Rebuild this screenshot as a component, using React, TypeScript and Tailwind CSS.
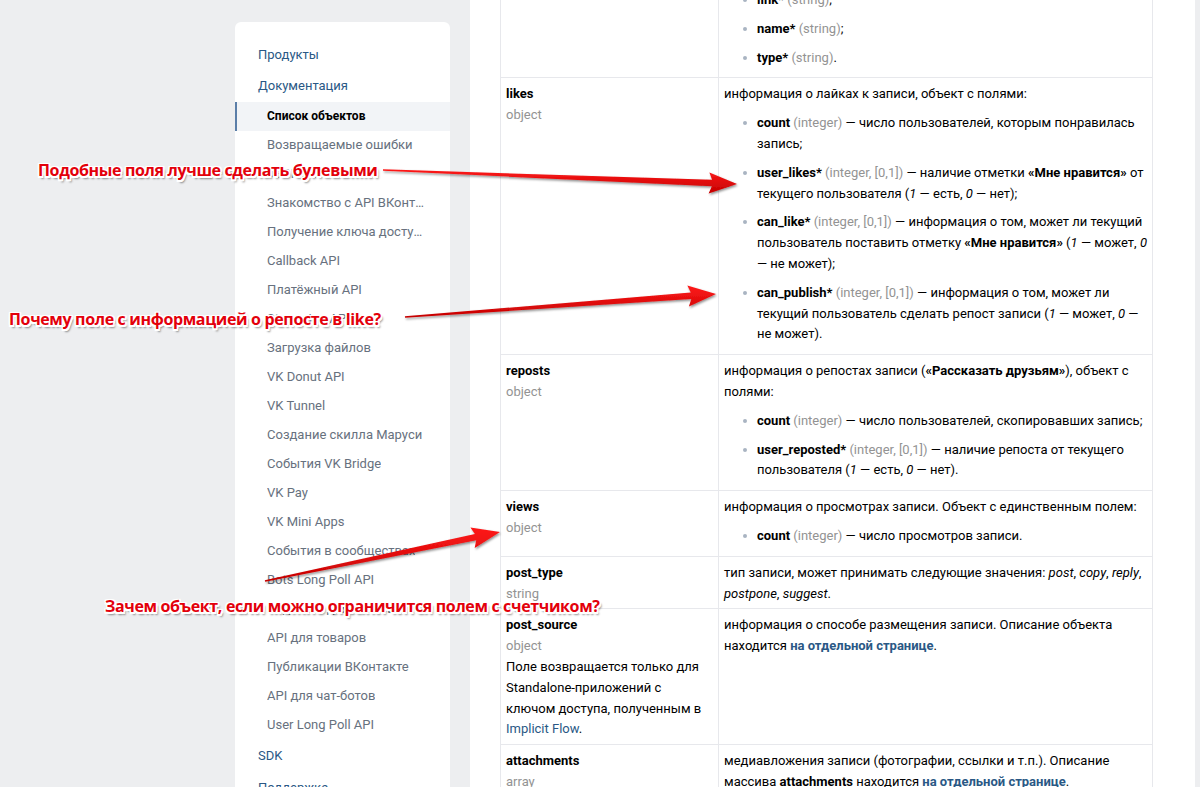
import React from 'react';

const subItems = [
  'Список объектов',
  'Возвращаемые ошибки',
  'JSON-схема',
  'Знакомство с API ВКонтакте',
  'Получение ключа доступа',
  'Callback API',
  'Платёжный API',
  'Streaming API',
  'Загрузка файлов',
  'VK Donut API',
  'VK Tunnel',
  'Создание скилла Маруси',
  'События VK Bridge',
  'VK Pay',
  'VK Mini Apps',
  'События в сообществах',
  'Bots Long Poll API',
  'Виджеты для сайтов',
  'API для товаров',
  'Публикации ВКонтакте',
  'API для чат-ботов',
  'User Long Poll API',
];

const Li: React.FC<{ children: React.ReactNode }> = ({ children }) => (
  <li className="flex mt-2">
    <span className="w-[4px] h-[4px] rounded-full bg-[#a9b4c2] mt-[8px] mr-[10px] shrink-0"></span>
    <div>{children}</div>
  </li>
);

const T: React.FC<{ children: React.ReactNode }> = ({ children }) => (
  <span className="text-[#939393]">{children}</span>
);

const Row: React.FC<{ name?: string; type?: string; extra?: React.ReactNode; children: React.ReactNode }> = ({
  name,
  type,
  extra,
  children,
}) => (
  <div className="grid grid-cols-[218px_435px] border-x border-b border-[#e7e8ec]">
    <div className="border-r border-[#e7e8ec] px-[5px] pt-[6px] pb-[4px]">
      {name && <div className="font-bold">{name}</div>}
      {type && <div className="text-[#939393]">{type}</div>}
      {extra}
    </div>
    <div className="px-[5px] pt-[6px] pb-[4px]">{children}</div>
  </div>
);

type Pt = { x1: number; y1: number; x2: number; y2: number };

function arrowPoints({ x1, y1, x2, y2 }: Pt) {
  const L = Math.hypot(x2 - x1, y2 - y1);
  const dx = (x2 - x1) / L;
  const dy = (y2 - y1) / L;
  const nx = -dy;
  const ny = dx;
  const headLen = 25;
  const w0 = 1.5;
  const w1 = 6.5;
  const hw = 21;
  const bx = x2 - dx * headLen;
  const by = y2 - dy * headLen;
  const p = (x: number, y: number) => `${x.toFixed(1)},${y.toFixed(1)}`;
  return [
    p(x1 + (nx * w0) / 2, y1 + (ny * w0) / 2),
    p(bx + (nx * w1) / 2, by + (ny * w1) / 2),
    p(bx + (nx * hw) / 2 - dx * 3, by + (ny * hw) / 2 - dy * 3),
    p(x2, y2),
    p(bx - (nx * hw) / 2 - dx * 3, by - (ny * hw) / 2 - dy * 3),
    p(bx - (nx * w1) / 2, by - (ny * w1) / 2),
    p(x1 - (nx * w0) / 2, y1 - (ny * w0) / 2),
  ].join(' ');
}

const arrows: Pt[] = [
  { x1: 383, y1: 170, x2: 737, y2: 184 },
  { x1: 405, y1: 317, x2: 716, y2: 294 },
  { x1: 265, y1: 581, x2: 500, y2: 532 },
];

const noteCls =
  'absolute whitespace-nowrap font-bold text-[16px] leading-[22px] tracking-[-0.35px] text-[#e3000b] [font-family:"Open_Sans",sans-serif] [text-shadow:-1.5px_-1.5px_0_#fff,1.5px_-1.5px_0_#fff,-1.5px_1.5px_0_#fff,1.5px_1.5px_0_#fff,0_1.5px_0_#fff,1.5px_0_0_#fff,0_-1.5px_0_#fff,-1.5px_0_0_#fff,2px_3px_2px_rgba(0,0,0,0.45)]';

export default function App() {
  return (
    <div className="relative h-[787px] overflow-hidden bg-[#edeef0] [font-family:Roboto,'Open_Sans',sans-serif] text-[13px] leading-[20.8px] text-black">
      <div className="flex pl-[235px] gap-[20px]">
        {/* sidebar */}
        <div className="w-[215px] mt-[22px] bg-white rounded-t-[6px] pt-[17px] shrink-0">
          <div className="h-[32px] flex items-center pl-[23px] text-[#2a5885]">Продукты</div>
          <div className="h-[31px] flex items-center pl-[23px] text-[#2a5885]">Документация</div>
          {subItems.map((s, i) =>
            i === 0 ? (
              <div
                key={s}
                className="h-[29px] flex items-center pl-[30px] pr-[24px] bg-[#f2f4f7] border-l-2 border-[#5b7ea8] font-bold text-[12px] text-black"
              >
                {s}
              </div>
            ) : (
              <div key={s} className="h-[29px] flex items-center pl-[32px] pr-[24px] text-[#67717e]">
                <span className="truncate">{s}</span>
              </div>
            ),
          )}
          <div className="h-[32px] flex items-center pl-[23px] text-[#2a5885]">SDK</div>
          <div className="h-[32px] flex items-center pl-[23px] text-[#2a5885]">Поддержка</div>
        </div>

        {/* content */}
        <div className="w-[725px] bg-white px-[30px] shrink-0">
          <div className="-mt-[24px] w-[653px]">
            <Row>
              <ul className="pl-[19px] pb-[5px]">
                <Li>
                  <b>link*</b> <T>(string)</T>;
                </Li>
                <Li>
                  <b>name*</b> <T>(string)</T>;
                </Li>
                <Li>
                  <b>type*</b> <T>(string)</T>.
                </Li>
              </ul>
            </Row>
            <Row name="likes" type="object">
              <div>информация о лайках к записи, объект с полями:</div>
              <ul className="pl-[19px] pb-[5px]">
                <Li>
                  <b>count</b> <T>(integer)</T> — число пользователей, которым понравилась запись;
                </Li>
                <Li>
                  <b>user_likes*</b> <T>(integer, [0,1])</T> — наличие отметки <b>«Мне нравится»</b> от текущего
                  пользователя (<i>1</i> — есть, <i>0</i> — нет);
                </Li>
                <Li>
                  <b>can_like*</b> <T>(integer, [0,1])</T> — информация о том, может ли текущий пользователь поставить
                  отметку <b>«Мне нравится»</b> (<i>1</i> — может, <i>0</i> — не может);
                </Li>
                <Li>
                  <b>can_publish*</b> <T>(integer, [0,1])</T> — информация о том, может ли текущий пользователь сделать
                  репост записи (<i>1</i> — может, <i>0</i> — не может).
                </Li>
              </ul>
            </Row>
            <Row name="reposts" type="object">
              <div>
                информация о репостах записи (<b>«Рассказать друзьям»</b>), объект с полями:
              </div>
              <ul className="pl-[19px] pb-[5px]">
                <Li>
                  <b>count</b> <T>(integer)</T> — число пользователей, скопировавших запись;
                </Li>
                <Li>
                  <b>user_reposted*</b> <T>(integer, [0,1])</T> — наличие репоста от текущего пользователя (<i>1</i> —
                  есть, <i>0</i> — нет).
                </Li>
              </ul>
            </Row>
            <Row name="views" type="object">
              <div>информация о просмотрах записи. Объект с единственным полем:</div>
              <ul className="pl-[19px] pb-[5px]">
                <Li>
                  <b>count</b> <T>(integer)</T> — число просмотров записи.
                </Li>
              </ul>
            </Row>
            <Row name="post_type" type="string">
              тип записи, может принимать следующие значения: <i>post</i>, <i>copy</i>, <i>reply</i>,{' '}
              <i>postpone</i>, <i>suggest</i>.
            </Row>
            <Row
              name="post_source"
              type="object"
              extra={
                <div>
                  Поле возвращается только для Standalone-приложений с ключом доступа, полученным в{' '}
                  <span className="text-[#2a5885]">Implicit Flow</span>.
                </div>
              }
            >
              информация о способе размещения записи. Описание объекта находится{' '}
              <span className="text-[#2a5885] font-bold">на отдельной странице</span>.
            </Row>
            <Row name="attachments" type="array">
              медиавложения записи (фотографии, ссылки и т.п.). Описание массива <b>attachments</b> находится{' '}
              <span className="text-[#2a5885] font-bold">на отдельной странице</span>.
            </Row>
          </div>
        </div>
      </div>

      {/* annotations */}
      <svg className="absolute inset-0 pointer-events-none" width="1200" height="787">
        <defs>
          <linearGradient id="ag" x1="0" y1="0" x2="0" y2="1">
            <stop offset="0" stopColor="#ff1a1a" />
            <stop offset="1" stopColor="#c40000" />
          </linearGradient>
          <filter id="sh" x="-10%" y="-50%" width="120%" height="200%">
            <feDropShadow dx="1" dy="1.5" stdDeviation="1" floodColor="#000" floodOpacity="0.45" />
          </filter>
        </defs>
        {arrows.map((a, i) => (
          <polygon key={i} points={arrowPoints(a)} fill="url(#ag)" filter="url(#sh)" />
        ))}
      </svg>
      <div className={noteCls + ' left-[38px] top-[159px]'}>Подобные поля лучше сделать булевыми</div>
      <div className={noteCls + ' left-[9px] top-[308px]'}>Почему поле с информацией о репосте в like?</div>
      <div className={noteCls + ' left-[105px] top-[595px]'}>Зачем объект, если можно ограничится полем с счетчиком?</div>
    </div>
  );
}
